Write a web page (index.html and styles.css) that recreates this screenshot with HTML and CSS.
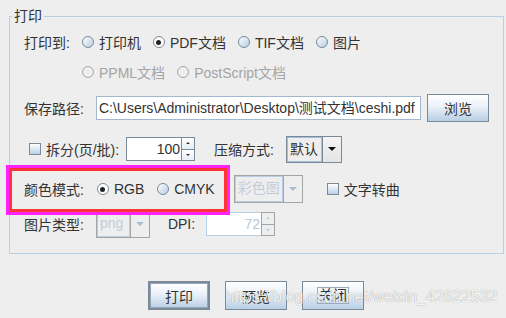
FILE: index.html
```html
<!DOCTYPE html>
<html>
<head>
  <meta charset="utf-8">
  <meta name="viewport" content="width=device-width, initial-scale=1.0">
  <title>打印</title>
  <link rel="stylesheet" href="styles.css">
</head>
<body>
  <fieldset class="panel">
    <legend>打印</legend>

    <div class="row row-target">
      <span class="label">打印到:</span>
      <label class="opt"><span class="radio"></span>打印机</label>
      <label class="opt"><span class="radio on"></span>PDF文档</label>
      <label class="opt"><span class="radio"></span>TIF文档</label>
      <label class="opt"><span class="radio"></span>图片</label>
    </div>

    <div class="row row-more">
      <label class="opt off"><span class="radio"></span>PPML文档</label>
      <label class="opt off"><span class="radio"></span>PostScript文档</label>
    </div>

    <div class="row row-path">
      <span class="label">保存路径:</span>
      <div class="textfield path-field">C:\Users\Administrator\Desktop\测试文档\ceshi.pdf</div>
      <button class="btn browse">浏览</button>
    </div>

    <div class="row row-split">
      <label class="opt"><span class="check"></span>拆分(页/批):</label>
      <div class="spinner split-spin">
        <div class="spin-field">100</div>
        <div class="spin-btns">
          <span class="spin-up"></span>
          <span class="spin-down"></span>
        </div>
      </div>
      <span class="label compress-label">压缩方式:</span>
      <div class="combo compress-combo">
        <div class="combo-text">默认</div>
        <div class="combo-arrow"><span class="tri"></span></div>
      </div>
    </div>

    <div class="row row-color">
      <span class="label">颜色模式:</span>
      <label class="opt rgb"><span class="radio on"></span>RGB</label>
      <label class="opt cmyk"><span class="radio"></span>CMYK</label>
      <div class="combo off color-combo">
        <div class="combo-text">彩色图</div>
        <div class="combo-arrow"><span class="tri"></span></div>
      </div>
      <label class="opt curve"><span class="check"></span>文字转曲</label>
    </div>

    <div class="row row-image">
      <span class="label">图片类型:</span>
      <div class="combo off type-combo">
        <div class="combo-text">png</div>
        <div class="combo-arrow"><span class="tri"></span></div>
      </div>
      <span class="label dpi-label">DPI:</span>
      <div class="spinner off dpi-spin">
        <div class="spin-field">72</div>
        <div class="spin-btns">
          <span class="spin-up"></span>
          <span class="spin-down"></span>
        </div>
      </div>
    </div>
  </fieldset>

  <div class="actions">
    <button class="btn default">打印</button>
    <button class="btn">预览</button>
    <button class="btn"><span class="focus">关闭</span></button>
  </div>

  <div class="highlight"></div>
  <div class="watermark">https://blog.csdn.net/weixin_42622532</div>
</body>
</html>
```

FILE: styles.css
```css
body {
  margin: 0;
  width: 506px;
  height: 318px;
  overflow: hidden;
  position: relative;
  background: #eeeeee;
  color: #333333;
  font-family: "Liberation Sans", "Noto Sans CJK SC", sans-serif;
  font-size: 14px;
}

.panel {
  margin: 8px 0 0 9px;
  width: 495px;
  box-sizing: border-box;
  padding: 0 0 14px 0;
  border: 1px solid #b8cfe5;
  min-inline-size: 0;
}

.panel legend {
  margin-left: 2px;
  padding: 0 2px;
  line-height: 16px;
}

.row {
  display: flex;
  align-items: center;
  height: 30px;
  padding-left: 14px;
}

.row-target { margin-top: 3px; }
.row-more { padding-left: 60px; }
.row-path { margin-top: 6px; }
.row-split { margin-top: 11px; padding-left: 19px; }
.row-color { margin-top: 10px; }
.row-image { margin-top: 5px; }

.label {
  white-space: nowrap;
}

.opt {
  display: inline-flex;
  align-items: center;
  gap: 5px;
  white-space: nowrap;
  margin-left: 12px;
}

.row-split .opt { margin-left: 0; }
.opt.rgb, .opt.cmyk { margin-left: 13px; }
.opt.curve { margin-left: 24px; }

.opt.off {
  color: #a4a4a4;
}

/* metal style radio */
.radio {
  width: 12px;
  height: 12px;
  box-sizing: border-box;
  border-radius: 50%;
  border: 1px solid #7a8a99;
  background: linear-gradient(135deg, #ffffff 0%, #dde8f3 45%, #b8cfe5 100%);
  position: relative;
}

.radio.on {
  background: #ffffff;
}

.radio.on::after {
  content: "";
  position: absolute;
  left: 2.5px;
  top: 2.5px;
  width: 5px;
  height: 5px;
  border-radius: 50%;
  background: #222222;
}

.off .radio {
  border-color: #a8a8a8;
  background: #eeeeee;
}

.check {
  width: 12px;
  height: 12px;
  box-sizing: border-box;
  border: 1px solid #7a8a99;
  background: linear-gradient(to bottom, #ffffff 0%, #dde8f3 50%, #b8cfe5 100%);
}

.textfield {
  height: 24px;
  box-sizing: border-box;
  border: 1px solid #a3b8cc;
  background: #ffffff;
  padding: 0 2px;
  line-height: 22px;
  white-space: nowrap;
  overflow: hidden;
}

.path-field {
  width: 325px;
  margin-left: 12px;
}

.btn {
  font: inherit;
  color: #333333;
  width: 62px;
  height: 29px;
  padding: 0;
  border: 1px solid #7a8a99;
  background: linear-gradient(to bottom, #ffffff 0%, #eaf1f8 45%, #b8cfe5 100%);
}

.browse {
  height: 28px;
  margin-left: 6px;
}

.btn.default {
  border: 2px solid #7a8a99;
  box-shadow: inset 0 0 0 1px #97a6b4;
}

.focus {
  border: 1px solid #9daabb;
  padding: 0 1px;
  line-height: 15px;
  display: inline-block;
}

/* spinners */
.spinner {
  display: flex;
  height: 24px;
}

.split-spin { margin-left: 7px; }
.dpi-spin { margin-left: 11px; }

.spin-field {
  width: 55px;
  box-sizing: border-box;
  border: 1px solid #7a8a99;
  border-right: none;
  background: #ffffff;
  text-align: right;
  line-height: 22px;
  padding-right: 1px;
}

.spin-btns {
  width: 14px;
  display: flex;
  flex-direction: column;
}

.spin-up, .spin-down {
  flex: 1;
  border: 1px solid #7a8a99;
  background: linear-gradient(to bottom, #ffffff 0%, #e6eef6 100%);
  position: relative;
}

.spin-down { border-top: none; }

.spin-up::after, .spin-down::after {
  content: "";
  position: absolute;
  left: 4px;
  top: 4px;
  border-left: 2px solid transparent;
  border-right: 2px solid transparent;
}

.spin-up::after { border-bottom: 2px solid #333333; }
.spin-down::after { border-top: 2px solid #333333; top: 4px; }

.spinner.off .spin-field {
  border-color: #b8cfe5;
  color: #b8c8d8;
}

.spinner.off .spin-up, .spinner.off .spin-down {
  border-color: #a4a4a4;
  background: #eeeeee;
}

.spinner.off .spin-up::after { border-bottom-color: #b8c8d8; }
.spinner.off .spin-down::after { border-top-color: #b8c8d8; }

/* combo boxes */
.combo {
  display: flex;
  height: 27px;
  box-sizing: border-box;
  border: 1px solid #7a8a99;
}

.compress-label { margin-left: 19px; }
.compress-combo { width: 56px; margin-left: 12px; }
.color-combo { width: 69px; margin-left: 19px; height: 28px; }
.type-combo { width: 54px; margin-left: 12px; height: 28px; }
.dpi-label { margin-left: 18px; }

.combo-text {
  flex: 1;
  border: 1px solid #a3bfdc;
  padding-left: 2px;
  line-height: 23px;
  white-space: nowrap;
  overflow: hidden;
}

.combo-arrow {
  width: 18px;
  border-left: 1px solid #7a8a99;
  background: linear-gradient(to bottom, #f4f4f4 0%, #e4e4e4 100%);
  display: flex;
  align-items: center;
  justify-content: center;
}

.tri {
  border-left: 4px solid transparent;
  border-right: 4px solid transparent;
  border-top: 4px solid #111111;
}

.combo.off {
  border-color: #a4a4a4;
}

.combo.off .combo-text {
  border-color: #b8cfe5;
  color: #c2cdd8;
}

.combo.off .combo-arrow {
  border-left-color: #a4a4a4;
  background: #eeeeee;
}

.combo.off .tri {
  border-top-color: #a9bbcf;
}

.actions {
  display: flex;
  gap: 15px;
  margin-top: 27px;
  padding-left: 148px;
}

/* annotation overlays */
.highlight {
  position: absolute;
  left: 6px;
  top: 165px;
  width: 224px;
  height: 50px;
  box-sizing: border-box;
  border: 3px solid #ff22ff;
  box-shadow: inset 0 0 0 3px #ff3535;
}

.watermark {
  position: absolute;
  left: 225px;
  top: 287px;
  font-size: 16px;
  line-height: 20px;
  color: rgba(255, 255, 255, 0.92);
  text-shadow: 0 0 1px rgba(0, 0, 0, 0.45);
  white-space: nowrap;
}
```
